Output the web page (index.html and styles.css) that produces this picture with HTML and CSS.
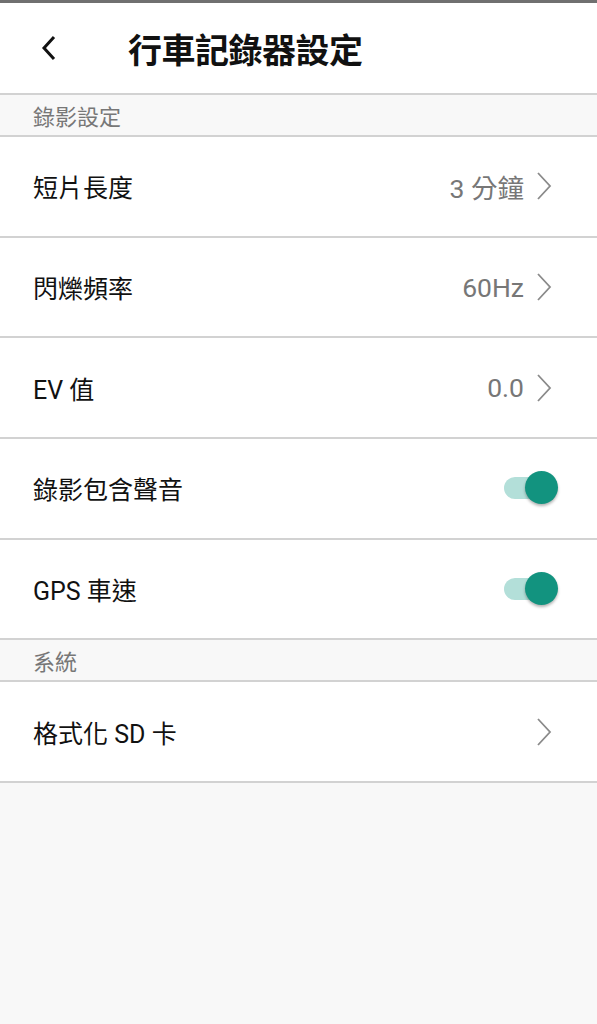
FILE: index.html
```html
<!DOCTYPE html>
<html lang="zh-Hant">

<head>
    <meta charset="UTF-8">
    <meta name="viewport" content="width=device-width, initial-scale=1.0">
    <title>行車記錄器設定</title>
    <link rel="stylesheet" href="styles.css">
</head>

<body>

    <header class="app-bar">
        <span class="back">
            <svg width="16" height="26" viewBox="0 0 16 26">
                <path d="M13 2 L3 13 L13 24" fill="none" stroke="#111" stroke-width="3" />
            </svg>
        </span>
        <h1>行車記錄器設定</h1>
    </header>

    <div class="section-title">錄影設定</div>

    <div class="row">
        <span class="label">短片長度</span>
        <span class="value">3 分鐘</span>
        <span class="chevron">
            <svg width="16" height="28" viewBox="0 0 16 28">
                <path d="M2 1 L14 14 L2 27" fill="none" stroke="#8a8a8a" stroke-width="1.8" />
            </svg>
        </span>
    </div>

    <div class="row">
        <span class="label">閃爍頻率</span>
        <span class="value">60Hz</span>
        <span class="chevron">
            <svg width="16" height="28" viewBox="0 0 16 28">
                <path d="M2 1 L14 14 L2 27" fill="none" stroke="#8a8a8a" stroke-width="1.8" />
            </svg>
        </span>
    </div>

    <div class="row">
        <span class="label">EV 值</span>
        <span class="value">0.0</span>
        <span class="chevron">
            <svg width="16" height="28" viewBox="0 0 16 28">
                <path d="M2 1 L14 14 L2 27" fill="none" stroke="#8a8a8a" stroke-width="1.8" />
            </svg>
        </span>
    </div>

    <div class="row">
        <span class="label">錄影包含聲音</span>
        <span class="switch"><span class="track"></span><span class="thumb"></span></span>
    </div>

    <div class="row">
        <span class="label">GPS 車速</span>
        <span class="switch"><span class="track"></span><span class="thumb"></span></span>
    </div>

    <div class="section-title">系統</div>

    <div class="row">
        <span class="label">格式化 SD 卡</span>
        <span class="chevron">
            <svg width="16" height="28" viewBox="0 0 16 28">
                <path d="M2 1 L14 14 L2 27" fill="none" stroke="#8a8a8a" stroke-width="1.8" />
            </svg>
        </span>
    </div>

</body>

</html>
```

FILE: styles.css
```css
body {
    font-family: Roboto, "Noto Sans CJK TC", sans-serif;
    background-color: #f8f8f8;
    margin: 0;
    border-top: 3px solid #707070;
    color: #111;
}

.app-bar {
    display: flex;
    align-items: center;
    height: 90px;
    background-color: #fff;
    border-bottom: 2px solid #d2d2d2;
}

.back {
    display: flex;
    width: 128px;
    padding-left: 41px;
    box-sizing: border-box;
}

.app-bar h1 {
    margin: 0;
    font-size: 34px;
    font-weight: bold;
    letter-spacing: -0.5px;
}

.section-title {
    height: 40px;
    display: flex;
    align-items: center;
    padding-left: 33px;
    font-size: 22px;
    color: #777;
    background-color: #f8f8f8;
    border-bottom: 2px solid #d2d2d2;
}

.row {
    display: flex;
    align-items: center;
    height: 98.7px;
    padding: 0 45px 0 33px;
    background-color: #fff;
    border-bottom: 2px solid #d2d2d2;
}

.label {
    flex: 1;
    font-size: 25px;
}

.value {
    font-size: 26.5px;
    color: #777;
    margin-right: 12px;
}

.chevron {
    display: flex;
}

.switch {
    position: relative;
    width: 54px;
    height: 34px;
    margin-right: -6px;
}

.switch .track {
    position: absolute;
    left: 0;
    top: 6px;
    width: 50px;
    height: 22px;
    border-radius: 11px;
    background-color: #b3dfd9;
}

.switch .thumb {
    position: absolute;
    right: 0;
    top: 0;
    width: 33px;
    height: 33px;
    border-radius: 50%;
    background-color: #12937f;
    box-shadow: 0 2px 3px rgba(0, 0, 0, 0.3);
}
```
